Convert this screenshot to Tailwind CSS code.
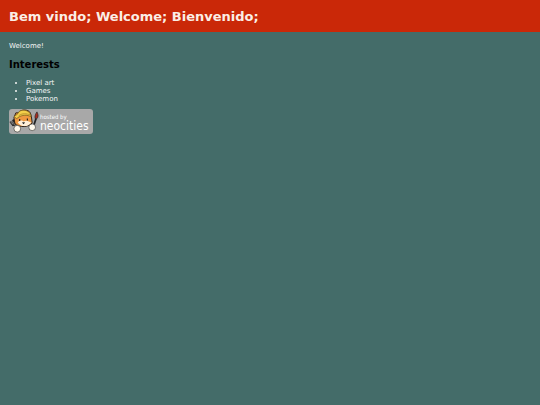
<!DOCTYPE html>
<html lang="pt">

<head>
    <meta charset="UTF-8">
    <meta name="viewport" content="width=device-width, initial-scale=1.0">
    <title>Bem vindo</title>
    <script src="https://cdn.jsdelivr.net/npm/@tailwindcss/browser@4"></script>
</head>

<body class="bg-[#446c69] text-[#f4f6f5] min-h-screen font-['DejaVu_Sans',sans-serif] text-[7px] leading-[8px]">
    <header class="bg-[#ca2808] px-[9px] pt-[9px] pb-[7px]">
        <h1 class="text-[13px] leading-4 font-bold text-[#fbeee6]">Bem vindo; Welcome; Bienvenido;</h1>
    </header>

    <main class="px-[9px] pt-[10px]">
        <p>Welcome!</p>

        <!-- Interests -->
        <h2 class="mt-[9px] text-[10px] leading-3 font-bold text-black">Interests</h2>
        <ul class="mt-2 pl-[17px] list-disc">
            <li>Pixel art</li>
            <li>Games</li>
            <li>Pokemon</li>
        </ul>

        <!-- Neocities badge -->
        <a href="https://neocities.org" class="mt-[6px] flex w-[84px] h-[25px] rounded-[3px] bg-[#a8a8a8] text-white">
            <svg class="w-[31px] h-[25px] shrink-0" viewBox="0 0 32 26" aria-hidden="true">
                <!-- fork -->
                <path d="M3 12l6 9M1 13l3 4 3-1M4 11l3 4" stroke="#222" stroke-width="1.6" fill="none" />
                <path d="M3 12l6 9M1 13l3 3" stroke="#ccc" stroke-width=".5" fill="none" />
                <!-- brush -->
                <path d="M25 19l3-9" stroke="#222" stroke-width="1.8" />
                <path d="M27 10c-.5-3 .5-5 2-7c1.500 3 1.500 5 0 7z" fill="#a82c20" stroke="#222" stroke-width=".7" />
                <!-- cat -->
                <path d="M5 9L7 4L10 4C12 0 20 0 22 4L23 7L24 14C22 19 10 20 6 15Z" fill="#ee9840" stroke="#2b211b" stroke-width="1" />
                <path d="M9 14c2-3 5-2 6-1c3-2 6 0 8 1c-3 5-11 5-14 0z" fill="#fff0da" />
                <path d="M5 8C7 6 9 6 10 3C13 0 20 1 22 5L23 8C17 5 11 7 8 10Z" fill="#f2cf49" stroke="#7d601d" stroke-width=".8" />
                <path d="M10 7c4-3 8-2 12-1" stroke="#aa8123" stroke-width=".8" fill="none" />
                <path d="M11 10.500v2M19 10v2M14 14l1 1 1-1" stroke="#222" stroke-width="1.200" fill="none" />
                <!-- paws -->
                <circle cx="8.500" cy="20.500" r="3.500" fill="#fff9ec" stroke="#222" stroke-width=".6" />
                <circle cx="24" cy="19" r="3.500" fill="#fff9ec" stroke="#222" stroke-width=".6" />
            </svg>
            <span class="flex flex-col pt-[4px] font-['DejaVu_Sans_Condensed','Open_Sans',sans-serif]">
                <span class="text-[6px] leading-[7px]">hosted by</span>
                <span class="text-[12px] leading-3">neocities</span>
            </span>
        </a>
    </main>
</body>

</html>
